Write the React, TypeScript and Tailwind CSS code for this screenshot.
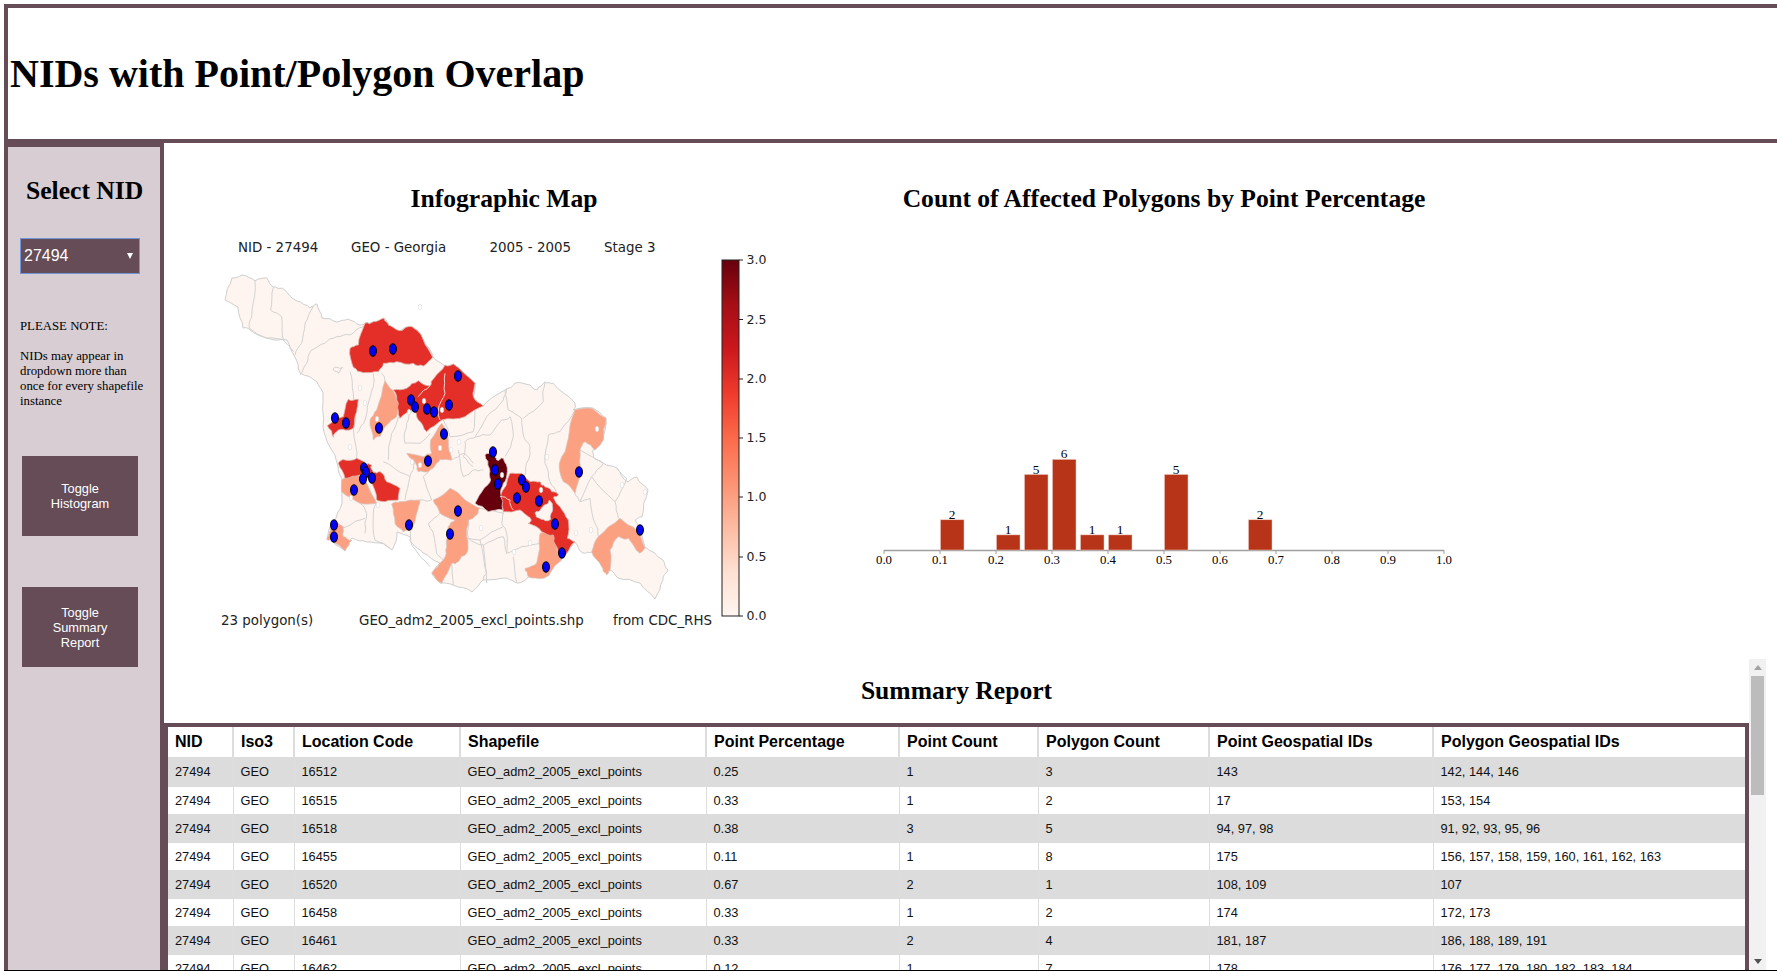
import { useState } from "react";

type Pt = [number, number];

// map shapes were traced off crops, so each list keeps the crop's origin and 3x scale
const crop = (ox: number, oy: number, pts: Pt[]) => pts.map(([x, y]) => `${ox + x / 3},${oy + y / 3}`).join(" ");
const A = (pts: Pt[]) => crop(210, 260, pts);
const B = (pts: Pt[]) => crop(210, 420, pts);
const C = (pts: Pt[]) => crop(460, 360, pts);

// the traced borders are too straight: push each segment's midpoint sideways to get a shoreline look
function rough(points: string, amp: number, closed: boolean) {
  const pts = points.split(" ").map((p) => p.split(",").map(Number));
  const out: string[] = [];
  const last = closed ? pts.length : pts.length - 1;
  for (let i = 0; i < last; i++) {
    const [x1, y1] = pts[i];
    const [x2, y2] = pts[(i + 1) % pts.length];
    const mx = (x1 + x2) / 2;
    const my = (y1 + y2) / 2;
    const h = Math.sin(mx * 12.9898 + my * 78.233) * 43758.5453;
    const d = (h - Math.floor(h) - 0.5) * amp;
    const len = Math.hypot(x2 - x1, y2 - y1) || 1;
    out.push(`${x1},${y1}`, `${mx + ((y2 - y1) / len) * d},${my - ((x2 - x1) / len) * d}`);
  }
  if (!closed) out.push(pts[pts.length - 1].join(","));
  return out.join(" ");
}
const shape = (p: string) => rough(rough(p, 3, true), 1.6, true);
const line = (p: string) => rough(rough(p, 3, false), 1.6, false);

const outline =
  "225,300 232,278 242,275 255,281 267,278 273,287 282,288 297,301 310,308 317,304 322,318 337,322 348,319 360,325 365,323 373,322 384,318 388,325 400,331 408,327 417,330 423,340 433,357 445,366 453,364 475,383 473,397 483,406 505,390 515,383 530,385 537,390 545,382 553,383 575,403 573,410 593,408 606,418 603,440 593,450 593,457 603,463 617,468 628,482 637,477 648,490 642,517 635,520 645,547 663,560 668,570 663,580 655,599 640,583 618,578 610,570 608,573 602,563 592,552 583,553 575,542 562,558 545,578 528,577 517,583 507,578 483,580 472,592 453,585 440,583 432,573 440,563 423,553 412,543 410,537 397,532 392,550 380,543 367,542 352,538 345,551 333,542 327,539 333,523 342,503 342,478 337,463 330,447 323,427 323,393 317,382 300,373 295,357 287,340 267,338 250,330 243,328 238,307";

const peach: string[] = [
  A([[525, 362], [548, 390], [565, 430], [560, 470], [530, 495], [510, 530], [490, 540], [480, 480], [500, 450]]),
  B([[695, 10], [715, 60], [725, 120], [690, 118], [680, 130], [655, 155], [625, 155], [615, 125], [590, 100], [640, 110], [665, 100], [662, 60]]),
  B([[395, 180], [440, 165], [470, 190], [500, 250], [450, 250], [395, 215]]),
  B([[545, 252], [570, 245], [630, 240], [620, 280], [605, 330], [580, 335], [555, 310]]),
  B([[670, 240], [720, 205], [765, 240], [810, 265], [800, 285], [775, 300], [770, 350], [770, 400], [745, 425], [725, 430], [695, 490], [665, 460], [700, 420], [710, 380], [715, 320], [735, 300], [690, 280]]),
  B([[365, 305], [400, 320], [400, 350], [425, 360], [405, 392], [370, 365], [350, 358]]),
  C([[240, 520], [280, 525], [290, 560], [305, 600], [270, 640], [250, 655], [205, 650], [195, 625], [230, 610]]),
  C([[345, 150], [395, 145], [438, 175], [430, 240], [405, 270], [375, 245], [360, 270], [360, 340], [345, 400], [310, 365], [298, 310], [325, 235]]),
  C([[480, 475], [530, 510], [555, 565], [540, 580], [505, 535], [475, 530], [450, 570], [450, 630], [440, 645], [425, 620], [395, 575], [415, 530]]),
];

const red: string[] = [
  A([[465, 190], [490, 185], [522, 175], [535, 195], [570, 212], [595, 200], [620, 210], [640, 240], [668, 292], [640, 318], [610, 310], [560, 305], [520, 310], [505, 335], [460, 338], [430, 322], [420, 265], [445, 255]]),
  A([[550, 390], [590, 385], [625, 362], [660, 378], [672, 355], [705, 315], [730, 312], [795, 370], [790, 410], [820, 438], [765, 470], [695, 480], [650, 515], [625, 480], [610, 445], [570, 475], [565, 430]]),
  A([[415, 418], [445, 418], [440, 455], [430, 505], [385, 510], [370, 532], [352, 497], [400, 470]]),
  B([[385, 130], [405, 120], [440, 115], [485, 135], [490, 158], [510, 155], [530, 185], [570, 205], [565, 240], [525, 245], [500, 240], [480, 180], [450, 165], [405, 175]]),
  C([[150, 340], [185, 340], [210, 365], [240, 365], [250, 375], [275, 395], [295, 405], [280, 412], [300, 440], [325, 480], [322, 535], [345, 545], [320, 580], [300, 597], [290, 560], [280, 525], [245, 515], [205, 490], [212, 476], [205, 470], [180, 450], [130, 455], [120, 410]]),
];

// uncoloured pocket enclosed by the big eastern red area
const pocket = C([[228, 455], [248, 440], [268, 420], [278, 445], [272, 478], [250, 478], [228, 470]]);

const dark = C([[75, 285], [95, 280], [110, 300], [130, 295], [142, 335], [130, 370], [122, 400], [128, 450], [85, 455], [45, 430], [72, 385], [92, 360], [88, 325]]);

const borders: string[] = [
  A([[135, 62], [125, 170], [118, 205]]),
  A([[190, 82], [182, 150], [215, 170], [220, 240], [250, 275]]),
  A([[118, 205], [170, 235], [225, 240]]),
  A([[310, 140], [285, 190], [275, 250], [255, 285]]),
  A([[460, 200], [420, 225], [380, 230], [345, 250], [305, 270], [290, 310], [270, 345]]),
  A([[420, 335], [430, 400], [435, 470], [430, 510], [440, 600]]),
  A([[490, 340], [490, 380], [475, 430], [465, 480], [440, 520]]),
  A([[515, 340], [525, 362]]),
  A([[565, 470], [545, 520], [535, 600]]),
  A([[610, 445], [590, 490], [585, 550], [630, 550], [660, 520]]),
  A([[700, 480], [720, 530], [790, 515], [795, 450]]),
  A([[795, 530], [830, 470], [880, 420], [890, 385]]),
  A([[370, 330], [385, 340], [398, 322], [380, 322], [370, 330]]),
  C([[150, 170], [125, 180], [90, 225], [50, 230], [15, 245], [10, 290], [40, 320]]),
  C([[150, 170], [160, 230], [135, 290]]),
  C([[135, 90], [145, 150], [185, 175], [190, 225], [210, 260], [205, 300], [195, 345]]),
  C([[255, 65], [250, 125], [190, 175]]),
  C([[345, 150], [300, 215], [265, 225], [255, 310], [270, 365], [295, 405]]),
  C([[360, 270], [430, 310], [395, 350], [360, 425], [345, 400]]),
  C([[395, 350], [465, 425], [500, 355], [470, 325]]),
  C([[360, 425], [390, 415], [410, 500], [415, 530]]),
  C([[465, 425], [475, 475]]),
  C([[130, 455], [125, 490], [140, 520], [140, 580], [185, 560], [240, 550]]),
  C([[60, 540], [80, 640], [70, 660]]),
  C([[0, 540], [60, 540], [130, 500]]),
  C([[160, 590], [170, 668]]),
  B([[450, 250], [470, 280], [465, 340]]),
  B([[500, 250], [490, 290], [495, 360], [540, 385]]),
  B([[465, 295], [410, 320], [400, 320]]),
  B([[520, 125], [560, 150], [600, 170], [585, 240]]),
  B([[600, 170], [615, 125]]),
  B([[600, 330], [605, 375], [660, 440]]),
  B([[630, 240], [665, 240], [640, 170], [655, 155]]),
  B([[690, 280], [655, 310], [670, 340], [680, 400], [700, 420]]),
  B([[775, 300], [775, 355], [820, 375], [830, 490]]),
  B([[820, 375], [880, 350], [890, 400]]),
  B([[725, 430], [730, 495]]),
  B([[745, 90], [760, 170], [790, 150], [820, 150]]),
  B([[725, 120], [760, 100], [790, 130]]),
  B([[810, 265], [880, 280]]),
];

const innerLines: string[] = [
  A([[625, 410], [660, 378]]),
  A([[705, 340], [705, 400], [685, 450], [690, 480]]),
  C([[120, 410], [150, 420], [160, 450]]),
];

const holes: Pt[] = [
  [420, 307], [360, 388], [377, 419], [365, 403], [424, 401], [409, 412], [442, 410], [459, 442], [451, 450],
  [440, 448], [350, 447], [366, 463], [351, 498], [378, 505], [412, 462], [420, 465], [502, 475], [481, 528],
  [597, 429], [622, 485], [591, 530], [576, 533], [541, 490], [530, 543], [514, 552], [645, 492], [547, 457],
];

const dots: Pt[] = [
  [373, 351], [393, 349], [458, 376], [411, 400], [415, 407], [427, 409], [434, 412], [449, 405], [335, 418], [346, 423], [379, 428], [444, 434],
  [493, 452], [495, 470], [498, 484], [428, 461], [364, 468], [366, 472], [363, 479], [372, 478], [354, 490], [458, 511], [409, 525], [450, 534], [334, 525], [334, 537],
  [522, 480], [526, 487], [517, 498], [539, 501], [555, 524], [562, 553], [546, 567], [579, 472], [640, 530],
];

const ticks = [
  { label: "3.0", y: 260 },
  { label: "2.5", y: 319.5 },
  { label: "2.0", y: 379 },
  { label: "1.5", y: 438 },
  { label: "1.0", y: 497 },
  { label: "0.5", y: 557 },
  { label: "0.0", y: 616 },
];

function GeorgiaMap() {
  return (
    <svg viewBox="184 214 640 445" className="block w-[640px] h-[445px] [font-family:'DejaVu_Sans',sans-serif]" fill="#222">
      <defs>
        <linearGradient id="reds" x1="0" y1="1" x2="0" y2="0">
          <stop offset="0" stopColor="#fff5f0" />
          <stop offset="0.125" stopColor="#fee0d2" />
          <stop offset="0.25" stopColor="#fcbba1" />
          <stop offset="0.375" stopColor="#fc9272" />
          <stop offset="0.5" stopColor="#fb6a4a" />
          <stop offset="0.625" stopColor="#ef3b2c" />
          <stop offset="0.75" stopColor="#cb181d" />
          <stop offset="0.875" stopColor="#a50f15" />
          <stop offset="1" stopColor="#67000d" />
        </linearGradient>
      </defs>

      <text x="238" y="252" fontSize="13.4">NID - 27494</text>
      <text x="351" y="252" fontSize="13.4">GEO - Georgia</text>
      <text x="489.5" y="252" fontSize="13.4">2005 - 2005</text>
      <text x="604" y="252" fontSize="13.4">Stage 3</text>

      <polygon points={shape(outline)} fill="#fff5f0" stroke="#cfcfcf" strokeWidth="1" strokeLinejoin="round" />
      {borders.map((p, i) => (
        <polyline key={i} points={line(p)} fill="none" stroke="#d2d2d2" strokeWidth="1" />
      ))}
      {peach.map((p, i) => (
        <polygon key={i} points={shape(p)} fill="#fca082" stroke="#d8c4bc" strokeWidth="0.8" strokeLinejoin="round" />
      ))}
      {red.map((p, i) => (
        <polygon key={i} points={shape(p)} fill="#e32f27" stroke="#d9b5ae" strokeWidth="0.8" strokeLinejoin="round" />
      ))}
      <polygon points={shape(pocket)} fill="#fff5f0" stroke="#d2d2d2" strokeWidth="0.8" strokeLinejoin="round" />
      <polygon points={shape(dark)} fill="#67000d" stroke="#d9c4c4" strokeWidth="0.8" strokeLinejoin="round" />
      {innerLines.map((p, i) => (
        <polyline key={i} points={line(p)} fill="none" stroke="#f3d3cc" strokeWidth="1" />
      ))}
      {holes.map(([x, y], i) => (
        <ellipse key={i} cx={x} cy={y} rx="1.8" ry="2.8" fill="#fff" stroke="#d5d5d5" strokeWidth="0.5" />
      ))}
      {dots.map(([x, y], i) => (
        <ellipse key={i} cx={x} cy={y} rx="3.4" ry="5.2" fill="#0000ff" stroke="#000" strokeWidth="1.1" />
      ))}

      <rect x="722" y="260" width="17" height="356" fill="url(#reds)" stroke="#222" strokeWidth="1" />
      {ticks.map((t) => (
        <g key={t.label}>
          <line x1="739" x2="743" y1={t.y} y2={t.y} stroke="#222" strokeWidth="1" />
          <text x="746.5" y={t.y + 4} fontSize="12.5">{t.label}</text>
        </g>
      ))}

      <text x="221" y="624.5" fontSize="13.4">23 polygon(s)</text>
      <text x="359" y="624.5" fontSize="13.4">GEO_adm2_2005_excl_points.shp</text>
      <text x="613" y="624.5" fontSize="13.4">from CDC_RHS</text>
    </svg>
  );
}

const bars = [
  { x: 940, n: 2 },
  { x: 996, n: 1 },
  { x: 1024, n: 5 },
  { x: 1052, n: 6 },
  { x: 1080, n: 1 },
  { x: 1108, n: 1 },
  { x: 1164, n: 5 },
  { x: 1248, n: 2 },
];

function Histogram() {
  return (
    <svg viewBox="824 214 680 445" className="block w-[680px] h-[445px] [font-family:'Liberation_Serif',serif]">
      <line x1="884" x2="1444" y1="550.5" y2="550.5" stroke="#a0a0a0" strokeWidth="1.5" />
      {[0, 0.1, 0.2, 0.3, 0.4, 0.5, 0.6, 0.7, 0.8, 0.9, 1].map((v, i) => (
        <g key={i}>
          <line x1={884 + i * 56} x2={884 + i * 56} y1="550" y2="554" stroke="#a0a0a0" strokeWidth="1" />
          <text x={884 + i * 56} y="564" fontSize="12.8" textAnchor="middle" fill="#000">{v.toFixed(1)}</text>
        </g>
      ))}
      {bars.map((b) => (
        <g key={b.x}>
          <rect x={b.x + 0.5} y={550 - b.n * 15.1} width="23.5" height={b.n * 15.1} fill="#b83418" stroke="#f0c9bd" strokeWidth="0.5" />
          <text x={b.x + 12} y={549 - b.n * 15.1} fontSize="13.3" textAnchor="middle" fill="#000">{b.n}</text>
        </g>
      ))}
    </svg>
  );
}

const rows = [
  ["16512", "0.25", "1", "3", "143", "142, 144, 146"],
  ["16515", "0.33", "1", "2", "17", "153, 154"],
  ["16518", "0.38", "3", "5", "94, 97, 98", "91, 92, 93, 95, 96"],
  ["16455", "0.11", "1", "8", "175", "156, 157, 158, 159, 160, 161, 162, 163"],
  ["16520", "0.67", "2", "1", "108, 109", "107"],
  ["16458", "0.33", "1", "2", "174", "172, 173"],
  ["16461", "0.33", "2", "4", "181, 187", "186, 188, 189, 191"],
  ["16462", "0.12", "1", "7", "178", "176, 177, 179, 180, 182, 183, 184"],
];

function rowHeight(i: number) {
  if (i === 0) return "h-[30px] bg-[#dcdcdc]";
  return i % 2 === 0 ? "h-[29px] bg-[#dcdcdc]" : "h-[27px]";
}

function SummaryTable() {
  return (
    <div className="border-4 border-b-0 border-[#654c57] w-full">
      <table className="w-full table-fixed border-collapse [font-family:'Liberation_Sans',sans-serif] text-left">
        <colgroup>
          <col className="w-[65px]" />
          <col className="w-[61px]" />
          <col className="w-[166px]" />
          <col className="w-[246px]" />
          <col className="w-[193px]" />
          <col className="w-[139px]" />
          <col className="w-[171px]" />
          <col className="w-[224px]" />
          <col />
        </colgroup>
        <thead>
          <tr className="h-[30px] text-base font-bold text-black">
            {["NID", "Iso3", "Location Code", "Shapefile", "Point Percentage", "Point Count", "Polygon Count", "Point Geospatial IDs", "Polygon Geospatial IDs"].map((h, i) => (
              <th key={h} className={i === 0 ? "px-[7px] font-bold" : "px-[7px] font-bold border-l-2 border-[#dddddd]"}>{h}</th>
            ))}
          </tr>
        </thead>
        <tbody className="text-[12.8px] text-[#111]">
          {rows.map((r, i) => (
            <tr key={r[0]} className={rowHeight(i)}>
              <td className="px-[7px] whitespace-nowrap">27494</td>
              <td className="px-[7px] border-l border-[#dddddd] whitespace-nowrap">GEO</td>
              <td className="px-[7px] border-l border-[#dddddd] whitespace-nowrap">{r[0]}</td>
              <td className="px-[7px] border-l border-[#dddddd] whitespace-nowrap">GEO_adm2_2005_excl_points</td>
              <td className="px-[7px] border-l border-[#dddddd] whitespace-nowrap">{r[1]}</td>
              <td className="px-[7px] border-l border-[#dddddd] whitespace-nowrap">{r[2]}</td>
              <td className="px-[7px] border-l border-[#dddddd] whitespace-nowrap">{r[3]}</td>
              <td className="px-[7px] border-l border-[#dddddd] whitespace-nowrap">{r[4]}</td>
              <td className="px-[7px] border-l border-[#dddddd] whitespace-nowrap">{r[5]}</td>
            </tr>
          ))}
        </tbody>
      </table>
    </div>
  );
}

function Scrollbar() {
  return (
    <div className="w-[17px] shrink-0 bg-[#f1f1f1] flex flex-col items-center">
      <div className="h-[17px] flex items-center justify-center shrink-0">
        <div className="w-0 h-0 border-x-[4px] border-x-transparent border-b-[5px] border-b-[#a3a3a3]" />
      </div>
      <div className="w-[13px] h-[119px] bg-[#bcbcbc] shrink-0" />
      <div className="flex-1" />
      <div className="h-[17px] flex items-center justify-center shrink-0">
        <div className="w-0 h-0 border-x-[4px] border-x-transparent border-t-[5px] border-t-[#505050]" />
      </div>
    </div>
  );
}

export default function App() {
  const [nid, setNid] = useState("27494");

  return (
    <div className="h-[971px] overflow-hidden bg-white pl-1 pt-1 [font-family:'Liberation_Serif',serif] text-black">
      <div className="h-full flex flex-col border-b border-black">
        <header className="h-[139px] shrink-0 border-4 border-r-0 border-[#654c57] flex items-center pl-[2px]">
          <h1 className="text-[40px] font-bold leading-none">NIDs with Point/Polygon Overlap</h1>
        </header>

        <div className="flex flex-1 min-h-0">
          <aside className="w-[160px] shrink-0 border-4 border-b-0 border-[#654c57] bg-[#d8cdd2] flex flex-col items-start">
            <h2 className="mt-[29px] ml-[18px] text-[25.6px] leading-[30px] font-bold">Select NID</h2>
            <div className="relative mt-[32px] ml-[12px] w-[120px] h-[36px]">
              <select
                value={nid}
                onChange={(e) => setNid(e.target.value)}
                className="w-full h-full appearance-none bg-[#654c57] text-white border border-[#7096d8] pl-[3px] text-base [font-family:'Liberation_Sans',sans-serif]"
              >
                <option value="27494">27494</option>
              </select>
              <span className="absolute right-[7px] top-[15px] w-0 h-0 border-x-[3px] border-x-transparent border-t-[6px] border-t-white" />
            </div>
            <p className="mt-[45px] ml-[12px] text-[12.8px] leading-[15px]">
              PLEASE NOTE:
              <br />
              <br />
              NIDs may appear in
              <br />
              dropdown more than
              <br />
              once for every shapefile
              <br />
              instance
            </p>
            <button className="mt-[47px] ml-[14px] w-[116px] h-[80px] px-6 bg-[#654c57] text-white text-[12.8px] leading-[15px] [font-family:'Liberation_Sans',sans-serif]">
              Toggle Histogram
            </button>
            <button className="mt-[51px] ml-[14px] w-[116px] h-[80px] px-6 bg-[#654c57] text-white text-[12.8px] leading-[15px] [font-family:'Liberation_Sans',sans-serif]">
              Toggle Summary Report
            </button>
          </aside>

          <main className="flex-1 min-w-0 flex flex-col">
            <div className="flex pl-[20px] pt-[41px] shrink-0">
              <section className="w-[640px]">
                <h2 className="text-[25.6px] leading-[30px] font-bold text-center">Infographic Map</h2>
                <GeorgiaMap />
              </section>
              <section className="w-[680px]">
                <h2 className="text-[25.6px] leading-[30px] font-bold text-center">Count of Affected Polygons by Point Percentage</h2>
                <Histogram />
              </section>
            </div>

            <div className="flex flex-1 min-h-0 pr-[11px]">
              <div className="flex-1 min-w-0 overflow-hidden">
                <h2 className="mt-[17px] mb-[17px] text-[25.6px] leading-[30px] font-bold text-center">Summary Report</h2>
                <SummaryTable />
              </div>
              <Scrollbar />
            </div>
          </main>
        </div>
      </div>
    </div>
  );
}
